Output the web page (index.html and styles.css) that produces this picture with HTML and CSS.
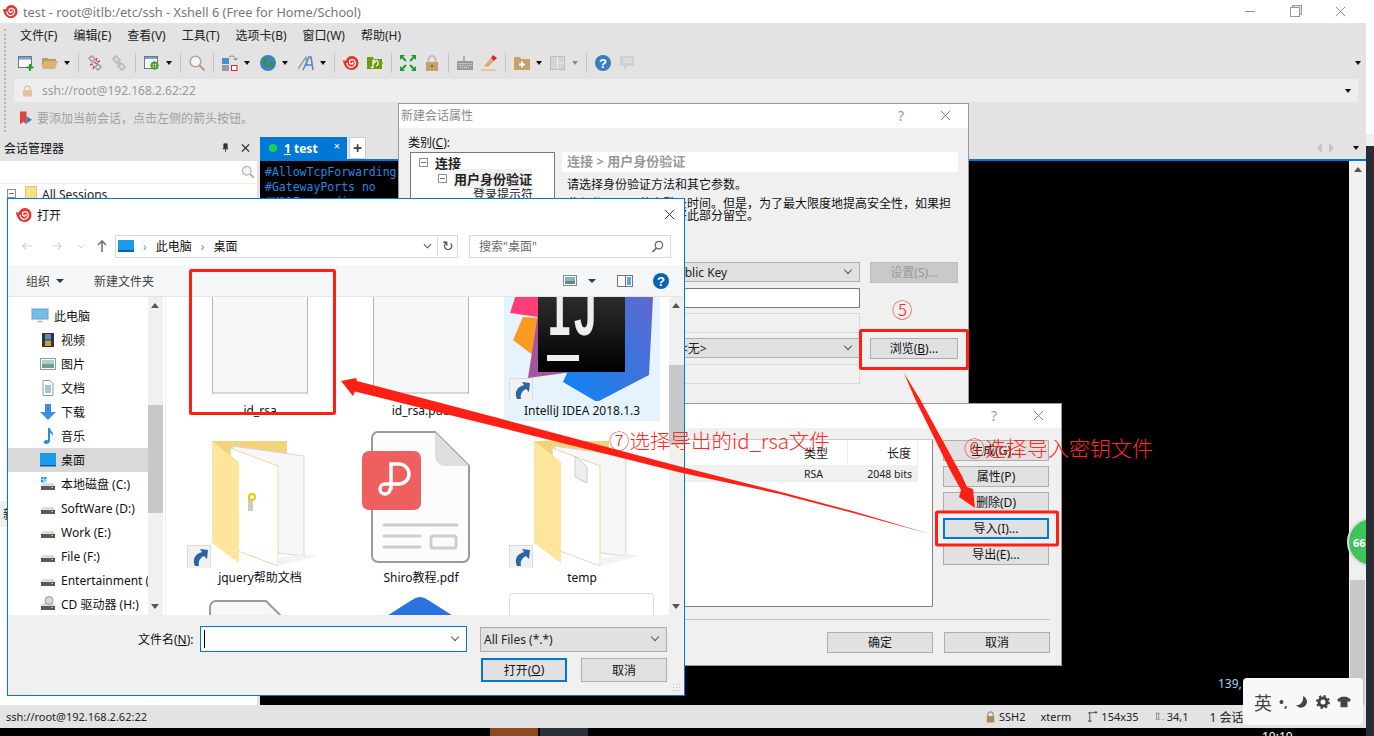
FILE: index.html
```html
<!DOCTYPE html>
<html lang="zh-CN">
<head>
    <meta charset="UTF-8">
    <title>test - root@itlb:/etc/ssh - Xshell 6</title>
    <link rel="stylesheet" href="styles.css">
</head>
<body>
    <!-- shared icons -->
    <svg class="defs" width="0" height="0">
        <symbol id="snail" viewBox="0 0 16 16">
            <path fill="#e5392e" d="M0 5c2 1 3 1 3.400-.5C4.500 2 6.500 1 9 1c3.500 0 6.500 3 6.500 7 0 4.500-3.500 7-7 7C4 15 .5 11 0 5z"/>
            <path fill="none" stroke="#fff" stroke-width="1.300" d="M4 8c0 3 3 5 5.500 4C12 11 13 8.500 12 6.500 11 4.500 8.500 4 7 5.500 5.800 7 6.500 9 8.500 9 10 9 10.400 7.500 9.500 7"/>
        </symbol>
        <symbol id="shortcut" viewBox="0 0 24 24">
            <rect x=".5" y=".5" width="23" height="23" fill="#f1f1f1" stroke="#dcdcdc"/>
            <path fill="#2b63a8" d="M13 4l8 1-1 9-3-3c-4 2-6 5-5 10H8C5 14 8 9 15 7z"/>
        </symbol>
        <symbol id="folder" viewBox="0 0 156 147">
            <path fill="#f3d27c" d="M30 20h75v60H50z"/>
            <path fill="#f7f7f7" stroke="#d5d5d5" d="M50 25l72 10v100l-25-3z"/>
            <path fill="#fff" stroke="#e8d9a8" d="M48 27l48 18v100l-40-15z"/>
            <path fill="#fee59c" d="M30 20l27 21v101l-27-20z"/>
            <path fill="#eee" opacity=".7" d="M96 145l40-10-14-2-26 4z"/>
        </symbol>
        <symbol id="blank-file" viewBox="0 0 156 147">
            <rect x="30.500" y="20" width="95" height="119" fill="#f6f7f8" stroke="#b4b4b4"/>
        </symbol>
        <symbol id="drive" viewBox="0 0 16 16">
            <path fill="#dcdcdc" d="M3 7h10l2 3H1z"/>
            <rect x="1" y="10" width="14" height="4" fill="#5a5a5a"/>
            <rect x="11" y="11" width="2" height="1" fill="#6fe06f"/>
        </symbol>
    </svg>

    <div class="screen">
        <div class="left-col">
            <div class="app">
                <header class="title-bar">
                    <svg class="title-logo"><use href="#snail"/></svg>
                    <span class="title-text">test - root@itlb:/etc/ssh - Xshell 6 (Free for Home/School)</span>
                    <div class="win-controls">
                        <span class="ctl-min"></span>
                        <span class="ctl-restore"></span>
                        <svg class="ctl-close" viewBox="0 0 12 12"><path d="M1 1l10 10M11 1L1 11" stroke="#8a8a8a" fill="none"/></svg>
                    </div>
                </header>

                <div class="chrome">
                    <nav class="menu-bar">
                        <span>文件(F)</span>
                        <span>编辑(E)</span>
                        <span>查看(V)</span>
                        <span>工具(T)</span>
                        <span>选项卡(B)</span>
                        <span>窗口(W)</span>
                        <span>帮助(H)</span>
                    </nav>

                    <div class="tool-bar">
                        <svg class="tool" viewBox="0 0 16 16"><rect x=".5" y="1.500" width="13" height="11" fill="#f7f7f7" stroke="#777"/><rect x="1" y="2" width="12" height="2.500" fill="#6aa5dc"/><path d="M12 9v7M8.500 12.500h7" stroke="#1fa02a" stroke-width="2"/></svg>
                        <svg class="tool" viewBox="0 0 16 16"><path fill="#c59a60" d="M0 3h6l1 1h7v2H3L0 13z"/><path fill="#dcb27a" d="M3 6h13l-3 8H0z"/></svg>
                        <i class="caret"></i>
                        <i class="sep"></i>
                        <svg class="tool" viewBox="0 0 16 16"><path d="M2 3l3-2 3 3-3 3zM8 12l3-3 3 3-3 3z" fill="none" stroke="#a5a5a5" stroke-width="1.600"/><path d="M7 7l3 2M10 3l-1 3M3 10l3-1M6 14l1-3M13 6l-3 1" stroke="#e2404a" stroke-width="1.400"/></svg>
                        <svg class="tool" viewBox="0 0 16 16"><path d="M2 4l3-3 4 4-3 3zM7 11l3-3 4 4-3 3z" fill="none" stroke="#bdbdbd" stroke-width="1.800"/><path d="M6 6l4 4" stroke="#bdbdbd" stroke-width="1.800"/></svg>
                        <i class="sep"></i>
                        <svg class="tool" viewBox="0 0 16 16"><rect x=".5" y="1.500" width="13" height="12" fill="#f5f5f5" stroke="#777"/><rect x="1" y="2" width="12" height="2" fill="#6aa5dc"/><circle cx="10.500" cy="10.500" r="3" fill="none" stroke="#52a032" stroke-width="2"/><path d="M10.500 6v9M6 10.500h9" stroke="#52a032" stroke-width="1.200"/></svg>
                        <i class="caret"></i>
                        <i class="sep"></i>
                        <svg class="tool" viewBox="0 0 16 16"><circle cx="6.500" cy="6.500" r="5.300" fill="#f4f4f4" stroke="#a8a8a8" stroke-width="1.500"/><path d="M10.500 10.500l5 5" stroke="#c69a62" stroke-width="2"/></svg>
                        <i class="sep"></i>
                        <svg class="tool" viewBox="0 0 16 16"><rect y="3" width="7" height="6" fill="#4a8fd4"/><rect y="10" width="7" height="6" fill="#9a9a9a"/><rect x="9.500" y="10.500" width="5.500" height="5" fill="#fff" stroke="#e02020"/><path d="M7 2c3-2 6-1 7 3M14 5l1.500-2M14 5l-2.500-1" stroke="#888" fill="none"/></svg>
                        <i class="caret"></i>
                        <svg class="tool nudge" viewBox="0 0 16 16"><circle cx="8" cy="8" r="8" fill="#3c82c8"/><path fill="#3f8f3a" d="M3 3l4-1 1 3-2 3 1 3-2 1-2-4zM10 6l4 1-1 5-3 2-1-5z"/></svg>
                        <i class="caret"></i>
                        <svg class="tool nudge" viewBox="0 0 16 16"><path d="M0 14L8 2l1 9" stroke="#9c9c9c" fill="none" stroke-width="1.400"/><path d="M5 15L11 2h2l2 13M7 10h7" stroke="#4f87c7" fill="none" stroke-width="1.600"/></svg>
                        <i class="caret"></i>
                        <i class="sep"></i>
                        <svg class="tool"><use href="#snail"/></svg>
                        <svg class="tool" viewBox="0 0 16 16"><path fill="#6a9e12" d="M0 2h6l1 2h8v3l1 1-1 1v5H0z"/><path d="M6 5v7c0 1-1 1-2 0M6 8c3 0 3-3 0-3M9 5c3 1 3 5 0 6" stroke="#fff" fill="none" stroke-width="1.200"/></svg>
                        <i class="sep"></i>
                        <svg class="tool" viewBox="0 0 16 16"><g fill="#1f9c2e"><path d="M0 0h5L0 5zM16 0v5l-5-5zM0 16v-5l5 5zM16 16h-5l5-5z"/></g><path d="M2 2l4 4M14 2l-4 4M2 14l4-4M14 14l-4-4" stroke="#1f9c2e" stroke-width="2"/></svg>
                        <svg class="tool" viewBox="0 0 16 16"><path d="M4.500 8V4.500a3.500 3.500 0 0 1 7 0V8" fill="none" stroke="#b5b5b5" stroke-width="1.600"/><rect x="2" y="7" width="12" height="9" fill="#c9a26b"/><circle cx="8" cy="11" r="1.300" fill="#8a6a3a"/></svg>
                        <i class="sep"></i>
                        <svg class="tool" viewBox="0 0 16 16"><rect y="6" width="16" height="9" fill="#999"/><path d="M1.500 8.500h13M1.500 10.500h13M3 12.500h10" stroke="#e3e3e3" stroke-dasharray="1 1"/><path d="M7 6V1" stroke="#777"/></svg>
                        <svg class="tool" viewBox="0 0 16 16"><path fill="#e0aa70" d="M3 11L10 3l3 3-6 6z"/><path fill="#d8262c" d="M10 3l2-3 4 3-3 3z"/><path d="M0 15h15" stroke="#e8b070" stroke-width="1.300"/></svg>
                        <i class="sep"></i>
                        <svg class="tool" viewBox="0 0 16 16"><path fill="#c9a06a" d="M0 2h6l1 2h9v11H0z"/><path d="M8 6.500v6M5 9.500h6" stroke="#fff" stroke-width="1.800"/></svg>
                        <i class="caret"></i>
                        <svg class="tool" viewBox="0 0 16 16"><rect x=".5" y="1.500" width="14" height="13" fill="#d4d4d4" stroke="#bbb"/><path d="M7.500 1.500v13M7.500 8h7" stroke="#ececec"/></svg>
                        <i class="caret off"></i>
                        <i class="sep"></i>
                        <svg class="tool" viewBox="0 0 16 16"><circle cx="8" cy="8" r="8" fill="#3a7dc4"/><text x="8" y="12.500" class="help-mark">?</text></svg>
                        <svg class="tool" viewBox="0 0 16 16"><path fill="#d0d0d0" d="M1 1h14v10H8l-3 4v-4H1z"/><path d="M3.500 4h9M3.500 7h9" stroke="#eee"/></svg>
                        <i class="caret end"></i>
                    </div>

                    <div class="address-bar">
                        <svg class="addr-lock" viewBox="0 0 12 12"><path d="M3 6V3.500a3 3 0 0 1 6 0V6" fill="none" stroke="#e0c49a" stroke-width="1.400"/><rect x="1" y="5" width="10" height="7" fill="#e0c49a"/></svg>
                        <span>ssh://root@192.168.2.62:22</span>
                        <i class="caret end"></i>
                    </div>

                    <div class="hint-bar">
                        <svg class="hint-flag" viewBox="0 0 14 14"><path fill="#e5433a" d="M0 0h7v14l-3.500-3L0 14z"/><path fill="#3a7dc4" d="M7 5l6 4-6 4z"/></svg>
                        <span>要添加当前会话，点击左侧的箭头按钮。</span>
                    </div>
                </div>

                <div class="main">
                    <aside class="session-panel">
                        <div class="panel-head">
                            <span>会话管理器</span>
                            <span class="panel-tools">
                                <svg viewBox="0 0 10 12"><path d="M3 1h4v5l1 1H2l1-1zM5 7v4" fill="#333" stroke="#333"/></svg>
                                <svg viewBox="0 0 10 10"><path d="M1 1l8 8M9 1L1 9" stroke="#222" stroke-width="1.400"/></svg>
                            </span>
                        </div>
                        <div class="panel-search">
                            <svg viewBox="0 0 16 16"><circle cx="6.500" cy="6.500" r="5" fill="#f2f2f2" stroke="#b5b5b5" stroke-width="1.400"/><path d="M10.500 10.500l4 4" stroke="#c9a26b" stroke-width="2"/></svg>
                        </div>
                        <div class="panel-tree">
                            <i class="tree-toggle"></i>
                            <i class="tree-folder"></i>
                            <span>All Sessions</span>
                        </div>
                        <div class="panel-props">新</div>
                    </aside>

                    <div class="work-area">
                        <div class="tab-row">
                            <div class="tab-active">
                                <i class="tab-dot"></i>
                                <span class="tab-name"><u>1</u> test</span>
                                <span class="tab-close">×</span>
                            </div>
                            <div class="tab-add">+</div>
                            <div class="tab-nav">
                                <i class="arrow-left"></i>
                                <i class="arrow-right"></i>
                                <i class="caret"></i>
                            </div>
                        </div>
                        <div class="term-wrap">
                            <pre class="terminal">#AllowTcpForwarding
#GatewayPorts no
#X11Forwarding</pre>
                            <div class="term-coords">139,</div>
                            <div class="term-scroll">
                                <i class="scroll-up"></i>
                                <i class="term-thumb"></i>
                            </div>
                        </div>
                    </div>
                </div>

                <footer class="status-bar">
                    <span>ssh://root@192.168.2.62:22</span>
                    <div class="status-right">
                        <span class="st-ssh"><svg viewBox="0 0 12 12"><path d="M3 6V3.500a3 3 0 0 1 6 0V6" fill="none" stroke="#999" stroke-width="1.300"/><rect x="2" y="5" width="8" height="7" fill="#a98a5a"/></svg>SSH2</span>
                        <span class="st-term">xterm</span>
                        <span class="st-size"><svg viewBox="0 0 12 12"><path d="M3 1v10M1 2l2-1 2 1M1 10l2 1 2-1M5 1h6M9 0l2 1-2 1" stroke="#444" fill="none"/></svg>154x35</span>
                        <span class="st-pos"><svg viewBox="0 0 12 12"><path d="M2 1v8M5 1v8M1 1h5M1 9h5M8 9h1M11 9h1" stroke="#777" fill="none"/></svg>34,1</span>
                        <span class="st-sess">1 会话</span>
                    </div>
                </footer>

                <div class="green-badge">66</div>
            </div>

            <div class="taskbar">
                <i class="task-orange"></i>
                <i class="task-gray"></i>
                <span class="task-time">10:10</span>
            </div>
        </div>

        <div class="right-strip">
            <i class="strip-white"></i>
            <i class="strip-light"></i>
        </div>
    </div>

    <!-- 新建会话属性 -->
    <section class="win props-win">
        <div class="win-title">
            <span>新建会话属性</span>
            <span class="win-help">?</span>
            <svg class="win-x" viewBox="0 0 12 12"><path d="M1 1l10 10M11 1L1 11" stroke="#777" fill="none"/></svg>
        </div>
        <div class="props-body">
            <div class="props-label">类别(<u>C</u>):</div>
            <div class="props-grid">
                <div class="props-tree">
                    <div class="tree-line lvl0"><i class="tree-toggle"></i><b>连接</b></div>
                    <div class="tree-line lvl1"><i class="tree-toggle"></i><b class="tree-sel">用户身份验证</b></div>
                    <div class="tree-line lvl2">登录提示符</div>
                </div>
                <div class="props-right">
                    <div class="props-head">连接 &gt; 用户身份验证</div>
                    <p class="props-text">请选择身份验证方法和其它参数。</p>
                    <p class="props-text second">此部分可用于节省登录时间。但是，为了最大限度地提高安全性，如果担<br>心密码泄露，建议您将此部分留空。</p>
                    <div class="form-row first">
                        <div class="combo public-key">Public Key<i class="chev"></i></div>
                        <div class="btn disabled">设置(S)...</div>
                    </div>
                    <div class="form-row"><div class="field"></div></div>
                    <div class="form-row"><div class="field off"></div></div>
                    <div class="form-row">
                        <div class="combo none-key">&lt;无&gt;<i class="chev"></i></div>
                        <div class="btn">浏览(<u>B</u>)...</div>
                    </div>
                    <div class="form-row"><div class="field off"></div></div>
                </div>
            </div>
        </div>
    </section>

    <!-- 用户密钥 -->
    <section class="win keys-win">
        <div class="win-title">
            <span>用户密钥</span>
            <span class="win-help">?</span>
            <svg class="win-x" viewBox="0 0 12 12"><path d="M1 1l10 10M11 1L1 11" stroke="#777" fill="none"/></svg>
        </div>
        <div class="keys-body">
            <div class="key-list">
                <div class="key-head">
                    <span class="col-name"></span>
                    <span class="col-type">类型</span>
                    <span class="col-len">长度</span>
                </div>
                <div class="key-row">
                    <span class="col-name">id_rsa_2048</span>
                    <span class="col-type">RSA</span>
                    <span class="col-len">2048 bits</span>
                </div>
            </div>
            <div class="key-actions">
                <div class="btn">生成(G)...</div>
                <div class="btn">属性(P)</div>
                <div class="btn">删除(D)</div>
                <div class="btn focused">导入(I)...</div>
                <div class="btn">导出(E)...</div>
            </div>
        </div>
        <div class="keys-foot">
            <div class="btn">确定</div>
            <div class="btn">取消</div>
        </div>
    </section>

    <!-- 打开 -->
    <section class="win open-win">
        <div class="open-title">
            <svg class="title-logo"><use href="#snail"/></svg>
            <span>打开</span>
            <svg class="open-x" viewBox="0 0 12 12"><path d="M1 1l10 10M11 1L1 11" stroke="#222" fill="none"/></svg>
        </div>
        <div class="open-nav">
            <svg class="nav-arrow" viewBox="0 0 14 12"><path d="M13 6H2M6 2L2 6l4 4" stroke="#d4d4d4" fill="none" stroke-width="1.400"/></svg>
            <svg class="nav-arrow" viewBox="0 0 14 12"><path d="M1 6h11M8 2l4 4-4 4" stroke="#d4d4d4" fill="none" stroke-width="1.400"/></svg>
            <svg class="nav-chev" viewBox="0 0 8 6"><path d="M1 1l3 3 3-3" stroke="#d4d4d4" fill="none"/></svg>
            <svg class="nav-arrow up" viewBox="0 0 12 14"><path d="M6 13V2M2 6l4-4 4 4" stroke="#777" fill="none" stroke-width="1.600"/></svg>
            <div class="path-box">
                <i class="desk-icon"></i>
                <span class="crumb">›</span>
                <span>此电脑</span>
                <span class="crumb">›</span>
                <span>桌面</span>
                <svg class="path-chev" viewBox="0 0 10 6"><path d="M1 1l4 4 4-4" stroke="#666" fill="none" stroke-width="1.300"/></svg>
                <span class="path-refresh">↻</span>
            </div>
            <div class="search-box">
                <span>搜索"桌面"</span>
                <svg viewBox="0 0 14 14"><circle cx="8.500" cy="5.500" r="4" fill="none" stroke="#666" stroke-width="1.300"/><path d="M6 8.500l-4.500 4.500" stroke="#666" stroke-width="1.600"/></svg>
            </div>
        </div>
        <div class="open-tools">
            <span class="tool-text">组织<i class="caret blue"></i></span>
            <span class="tool-text">新建文件夹</span>
            <div class="view-tools">
                <svg class="view-icon" viewBox="0 0 14 11"><rect x=".5" y=".5" width="13" height="10" fill="#fff" stroke="#888"/><rect x="2" y="2" width="10" height="3.500" fill="#7fb2dc"/><rect x="2" y="5.500" width="10" height="3.500" fill="#5f8f6a"/></svg>
                <i class="caret blue"></i>
                <svg class="pane-icon" viewBox="0 0 16 12"><rect x=".5" y=".5" width="15" height="11" fill="#fff" stroke="#777"/><rect x="10" y="2" width="4" height="8" fill="#5ea6de"/><path d="M8.500 1v10" stroke="#777"/></svg>
                <svg class="help-icon" viewBox="0 0 16 16"><circle cx="8" cy="8" r="8" fill="#0a62b4"/><text x="8" y="12.500" class="help-mark">?</text></svg>
            </div>
        </div>
        <div class="open-body">
            <div class="side-nav">
                <ul class="nav-list">
                    <li class="root"><svg viewBox="0 0 18 16"><rect x="1" y="1" width="16" height="10" fill="#6cc0ee" stroke="#7a9ab0"/><path d="M6 14h6M9 11v3" stroke="#9ab"/></svg>此电脑</li>
                    <li><svg viewBox="0 0 16 16"><rect x="2" y="1" width="12" height="14" fill="#333"/><rect x="5" y="2" width="6" height="5.500" fill="#5b86c8"/><rect x="5" y="8.500" width="6" height="5.500" fill="#c89b4a"/></svg>视频</li>
                    <li><svg viewBox="0 0 16 16"><rect x=".5" y="2.500" width="15" height="11" fill="#fff" stroke="#999"/><rect x="2" y="4" width="12" height="4" fill="#a8cfe0"/><rect x="2" y="8" width="12" height="4" fill="#6f9f80"/></svg>图片</li>
                    <li><svg viewBox="0 0 16 16"><path d="M3 .5h7l3 3v12H3z" fill="#fff" stroke="#999"/><path d="M5 6h6M5 8h6M5 10h6M5 12h6" stroke="#3a8fc0"/></svg>文档</li>
                    <li><svg viewBox="0 0 16 16"><path fill="#3f8be0" d="M5 0h6v8h5l-8 8-8-8h5z"/></svg>下载</li>
                    <li><svg viewBox="0 0 16 16"><path fill="#1f90e8" d="M8 0h2c0 3 4 4 3 8-1-2-2-3-3-3v8c0 2-2 3-4 3-3 0-3-3 0-4 1 0 2 0 2 .5z"/></svg>音乐</li>
                    <li class="selected"><svg viewBox="0 0 16 16"><rect y="1" width="16" height="13" fill="#1c9be8"/><rect y="13" width="16" height="1.500" fill="#0a60a8"/></svg>桌面</li>
                    <li><svg viewBox="0 0 16 16"><use href="#drive"/><rect x="1" y="1" width="2.500" height="2.500" fill="#1ca0f0"/><rect x="4" y="1" width="2.500" height="2.500" fill="#1ca0f0"/><rect x="1" y="4" width="2.500" height="2.500" fill="#1ca0f0"/><rect x="4" y="4" width="2.500" height="2.500" fill="#8fd0f5"/></svg>本地磁盘 (C:)</li>
                    <li><svg viewBox="0 0 16 16"><use href="#drive"/></svg>SoftWare (D:)</li>
                    <li><svg viewBox="0 0 16 16"><use href="#drive"/></svg>Work (E:)</li>
                    <li><svg viewBox="0 0 16 16"><use href="#drive"/></svg>File (F:)</li>
                    <li><svg viewBox="0 0 16 16"><use href="#drive"/></svg>Entertainment (G:)</li>
                    <li><svg viewBox="0 0 16 16"><use href="#drive"/><circle cx="9" cy="4.500" r="4" fill="#d8d8d8" stroke="#999"/></svg>CD 驱动器 (H:)</li>
                </ul>
                <div class="scroll-bar">
                    <i class="scroll-up"></i>
                    <i class="side-thumb"></i>
                    <i class="scroll-down"></i>
                </div>
            </div>
            <div class="file-pane">
                <div class="file-grid">
                    <div class="tile">
                        <svg class="tile-icon"><use href="#blank-file"/></svg>
                        <span>id_rsa</span>
                    </div>
                    <div class="tile">
                        <svg class="tile-icon"><use href="#blank-file"/></svg>
                        <span>id_rsa.pub</span>
                    </div>
                    <div class="tile selected">
                        <svg class="tile-icon" viewBox="0 0 156 147">
                            <defs>
                                <linearGradient id="ij-blue" x1="0" y1="1" x2="1" y2="0"><stop offset="0" stop-color="#0a86f5"/><stop offset="1" stop-color="#6a64c8"/></linearGradient>
                                <linearGradient id="ij-black" x1="0" y1="0" x2="0" y2="1"><stop offset="0" stop-color="#333"/><stop offset="1" stop-color="#000"/></linearGradient>
                            </defs>
                            <path fill="#ff3d78" d="M18 22l40-5-10 48-42-6z"/>
                            <path fill="#fb9a20" d="M9 86l10-23 30 2-2 50z"/>
                            <path fill="#a4559e" d="M24 124l14-90 70 70-40 14z"/>
                            <path fill="url(#ij-blue)" d="M149 43l-4 78-52 27-34-20 50-110 40 10z"/>
                            <rect x="34" y="31" width="87" height="87" fill="url(#ij-black)"/>
                            <text x="43" y="81" class="ij-text" textLength="51" lengthAdjust="spacingAndGlyphs">IJ</text>
                            <rect x="43" y="101" width="32" height="6" fill="#eee"/>
                            <use href="#shortcut" x="5" y="124" width="24" height="24"/>
                        </svg>
                        <span>IntelliJ IDEA 2018.1.3</span>
                    </div>
                    <div class="tile">
                        <svg class="tile-icon" viewBox="0 0 156 147">
                            <use href="#folder"/>
                            <use href="#shortcut" x="5" y="124" width="24" height="24"/>
                            <rect x="66" y="78" width="5" height="12" fill="#ccc"/>
                            <circle cx="70" cy="76" r="3" fill="none" stroke="#e8c800" stroke-width="2"/>
                        </svg>
                        <span>jquery帮助文档</span>
                    </div>
                    <div class="tile">
                        <svg class="tile-icon" viewBox="0 0 156 147">
                            <path d="M35 11h57l34 34v90a6 6 0 0 1-6 6H35a6 6 0 0 1-6-6V17a6 6 0 0 1 6-6z" fill="#fcfcfc" stroke="#9a9a9a" stroke-width="2"/>
                            <path d="M92 11l34 34h-24a10 10 0 0 1-10-10z" fill="#dedede"/>
                            <rect x="19" y="30" width="59" height="59" rx="7" fill="#ee6060"/>
                            <path d="M48 68V43h8a10 10 0 0 1 0 20H42a5 5 0 1 0 5 5" fill="none" stroke="#fff" stroke-width="3.500" stroke-linecap="round"/>
                            <path d="M41 104h73M41 115h36M41 126h36" stroke="#cdcdcd" stroke-width="3" stroke-linecap="round"/>
                            <rect x="88" y="115" width="25" height="12" rx="2" fill="none" stroke="#cdcdcd" stroke-width="3"/>
                        </svg>
                        <span>Shiro教程.pdf</span>
                    </div>
                    <div class="tile">
                        <svg class="tile-icon" viewBox="0 0 156 147">
                            <use href="#folder"/>
                            <path fill="#eee" stroke="#ccc" d="M71 35l12 11v16l-12-6z"/>
                            <use href="#shortcut" x="5" y="124" width="24" height="24"/>
                        </svg>
                        <span>temp</span>
                    </div>
                    <div class="tile">
                        <svg class="tile-icon" viewBox="0 0 156 147"><path d="M34 13h50l14 14v120H28V19a6 6 0 0 1 6-6z" fill="#f7f7f7" stroke="#9a9a9a" stroke-width="2"/></svg>
                    </div>
                    <div class="tile">
                        <svg class="tile-icon" viewBox="0 0 156 147"><path d="M77 9q-4 0-8 3L20 43v104h114V43L85 12q-4-3-8-3z" fill="#2a72e0"/></svg>
                    </div>
                    <div class="tile">
                        <svg class="tile-icon" viewBox="0 0 156 147"><rect x="5.500" y="5.500" width="144" height="140" rx="3" fill="#fff" stroke="#ddd"/></svg>
                    </div>
                </div>
                <div class="scroll-bar">
                    <i class="scroll-up"></i>
                    <i class="file-thumb"></i>
                    <i class="scroll-down"></i>
                </div>
            </div>
        </div>
        <div class="open-foot">
            <div class="foot-row">
                <label class="name-label">文件名(<u>N</u>):</label>
                <div class="name-input"><i class="text-caret"></i><i class="chev"></i></div>
                <div class="type-select">All Files (*.*)<i class="chev"></i></div>
            </div>
            <div class="foot-row actions">
                <div class="btn primary">打开(<u>O</u>)</div>
                <div class="btn">取消</div>
            </div>
            <i class="size-grip"></i>
        </div>
    </section>

    <!-- 教程标注 -->
    <svg class="marks" viewBox="0 0 1374 736">
        <g fill="none" stroke="#ff2015" stroke-width="3">
            <rect x="190.500" y="270.500" width="144" height="143" rx="1"/>
            <rect x="860.500" y="330.500" width="107" height="38" rx="1"/>
            <rect x="936.500" y="512" width="121" height="33" rx="1"/>
        </g>
        <g fill="#ff2015">
            <path d="M341 381l15-3 1 3 143 37.500 180 48 100 25.300 75 20L930 534 855 513.500 780 494l-100-21.500-180-45-145-36-2 4.500z"/>
            <path d="M904 373l16.500 27L962 476l5 11 6 2 2 19-16-11 2-7-11-20-34.500-70z"/>
        </g>
        <g class="mark-text">
            <text x="609" y="449">⑦选择导出的id_rsa文件</text>
            <text class="six" x="964" y="456">⑥选择导入密钥文件</text>
            <text x="892" y="318">⑤</text>
        </g>
    </svg>

    <!-- 输入法状态条 -->
    <div class="ime-bar">
        <span class="ime-char">英</span>
        <span class="ime-dots">•,</span>
        <svg viewBox="0 0 14 14"><path fill="#444" d="M8 1a6 6 0 1 1-7 9c4 1 8-3 7-9z"/></svg>
        <svg viewBox="0 0 14 14"><circle cx="7" cy="7" r="4" fill="none" stroke="#444" stroke-width="3"/><circle cx="7" cy="7" r="6" fill="none" stroke="#444" stroke-width="2" stroke-dasharray="2.200 2.500"/></svg>
        <svg viewBox="0 0 16 14"><path fill="#444" d="M5 1h6l5 3-2 3-2-1v7H4V6L2 7 0 4z"/></svg>
    </div>
</body>
</html>
```

FILE: styles.css
```css
* {
    box-sizing: border-box;
}

html, body {
    margin: 0;
    padding: 0;
    width: 1374px;
    height: 736px;
    overflow: hidden;
}

body {
    position: relative;
    font-family: "Noto Sans", "Noto Sans CJK SC", sans-serif;
    font-size: 12px;
    color: #222;
    background: #2b2b36;
}

i {
    display: block;
}

.defs {
    position: absolute;
}

.screen {
    display: flex;
    height: 736px;
}

.left-col {
    width: 1366px;
    display: flex;
    flex-direction: column;
}

.right-strip {
    width: 8px;
    display: flex;
    flex-direction: column;
}

.strip-white {
    height: 134px;
    background: #fff;
}

.strip-light {
    height: 12px;
    background: #f0f0f0;
}

/* Xshell window */
.app {
    position: relative;
    height: 728px;
    display: flex;
    flex-direction: column;
    overflow: hidden;
    background: #e3e3e3;
}

.title-bar {
    height: 23px;
    flex: none;
    display: flex;
    align-items: center;
    background: #fff;
    padding-left: 3px;
}

.title-logo {
    width: 15px;
    height: 15px;
}

.title-text {
    margin-left: 5px;
    font-size: 12.750px;
    color: #777;
    white-space: nowrap;
}

.win-controls {
    margin-left: auto;
    display: flex;
    align-items: center;
    padding-right: 20px;
    gap: 35px;
}

.ctl-min {
    width: 10px;
    height: 1px;
    background: #999;
}

.ctl-restore {
    width: 10px;
    height: 10px;
    border: 1px solid #999;
    box-shadow: 2px -2px 0 -1px #e3e3e3, 2px -2px 0 0 #999;
}

.ctl-close {
    width: 11px;
    height: 11px;
}

.chrome {
    position: relative;
    height: 111px;
    flex: none;
    padding-left: 14px;
}

.chrome::before {
    content: "";
    position: absolute;
    left: 4px;
    top: 6px;
    bottom: 2px;
    border-left: 2px dotted #b5b5b5;
}

.menu-bar {
    height: 25px;
    display: flex;
    align-items: center;
    gap: 16px;
    padding: 0 0 2px 6px;
    color: #222;
}

.tool-bar {
    height: 30px;
    display: flex;
    align-items: center;
    gap: 8px;
    padding-left: 4px;
}

.tool {
    width: 16px;
    height: 16px;
    flex: none;
}

.nudge {
    margin-left: 2px;
}

.caret {
    width: 0;
    height: 0;
    flex: none;
    margin-left: -2px;
    border-left: 3px solid transparent;
    border-right: 3px solid transparent;
    border-top: 4px solid #111;
}

.caret.off {
    border-top-color: #888;
}

.caret.end {
    margin-left: auto;
}

.caret.blue {
    margin-left: 0;
    border-left-width: 4px;
    border-right-width: 4px;
    border-top: 4px solid #1e3a60;
}

.sep {
    width: 1px;
    height: 20px;
    flex: none;
    background: #c4c4c4;
}

.tool-bar .caret.end {
    margin-right: 5px;
}

.address-bar {
    height: 23px;
    margin-top: 1px;
    margin-right: 8px;
    display: flex;
    align-items: center;
    padding: 0 7px 0 8px;
    background: #eeeeee;
    color: #9a9a9a;
}

.addr-lock {
    width: 11px;
    height: 12px;
    margin-right: 9px;
}

.hint-bar {
    height: 32px;
    display: flex;
    align-items: center;
    padding-left: 6px;
    color: #9f9f9f;
}

.hint-flag {
    width: 13px;
    height: 14px;
    margin-right: 4px;
}

.main {
    flex: 1;
    display: flex;
    min-height: 0;
}

.session-panel {
    width: 257px;
    flex: none;
    display: flex;
    flex-direction: column;
    background: #fff;
}

.panel-head {
    height: 27px;
    flex: none;
    display: flex;
    align-items: center;
    justify-content: space-between;
    padding: 0 7px 0 4px;
    background: #e3e3e3;
    color: #111;
}

.panel-tools {
    display: flex;
    gap: 11px;
    align-items: center;
}

.panel-tools svg {
    width: 9px;
    height: 10px;
}

.panel-search {
    height: 23px;
    flex: none;
    display: flex;
    align-items: center;
    justify-content: flex-end;
    padding-right: 2px;
    border-bottom: 1px solid #eee;
}

.panel-search svg {
    width: 14px;
    height: 14px;
}

.panel-tree {
    height: 317px;
    flex: none;
    display: flex;
    align-items: flex-start;
    gap: 5px;
    padding: 2px 0 0 7px;
}

.tree-toggle {
    width: 9px;
    height: 9px;
    flex: none;
    border: 1px solid #919191;
    background: linear-gradient(#777, #777) center / 5px 1px no-repeat;
    margin-top: 3px;
}

.tree-folder {
    width: 12px;
    height: 15px;
    margin-left: 4px;
    background: #ffe08a;
    border: 1px solid #e6c66a;
}

.panel-props {
    height: 26px;
    flex: none;
    padding: 4px 0 0 3px;
    background: #f0f0f0;
}

.work-area {
    flex: 1;
    min-width: 0;
    margin-left: 3px;
    display: flex;
    flex-direction: column;
}

.tab-row {
    height: 27px;
    flex: none;
    display: flex;
    align-items: flex-end;
    gap: 2px;
    padding-top: 3px;
    border-bottom: 2px solid #0078d7;
}

.tab-active {
    width: 87px;
    height: 22px;
    display: flex;
    align-items: center;
    padding-left: 9px;
    background: #0078d7;
    color: #fff;
    font-weight: 700;
}

.tab-dot {
    width: 8px;
    height: 8px;
    border-radius: 50%;
    background: #18d24e;
}

.tab-name {
    margin-left: 7px;
}

.tab-close {
    margin-left: auto;
    padding: 0 7px 6px 0;
    font-weight: 400;
    font-size: 11px;
}

.tab-add {
    width: 17px;
    height: 22px;
    text-align: center;
    line-height: 20px;
    background: #fff;
    border: 1px solid #ccc;
    font-size: 16px;
    font-weight: 700;
    color: #444;
}

.tab-nav {
    margin-left: auto;
    height: 22px;
    display: flex;
    align-items: center;
    gap: 7px;
    padding-right: 7px;
}

.tab-nav .caret {
    margin-left: 12px;
}

.arrow-left, .arrow-right {
    width: 0;
    height: 0;
    border-top: 5px solid transparent;
    border-bottom: 5px solid transparent;
}

.arrow-left {
    border-right: 5px solid #c4c4c4;
}

.arrow-right {
    border-left: 5px solid #c4c4c4;
}

.term-wrap {
    flex: 1;
    position: relative;
    display: flex;
    min-height: 0;
    background: #000;
}

.terminal {
    flex: 1;
    margin: 0;
    padding: 4px 0 0 5px;
    font-family: "DejaVu Sans Mono", monospace;
    font-size: 11.500px;
    line-height: 15px;
    color: #2388e0;
}

.term-coords {
    position: absolute;
    left: 958px;
    bottom: 13px;
    color: #a8ccf0;
}

.term-scroll {
    width: 17px;
    flex: none;
    display: flex;
    flex-direction: column;
    background: #f0f0f0;
    padding-top: 6px;
}

.term-thumb {
    margin: auto 1px 0;
    height: 125px;
    background: #c8c8c8;
}

.scroll-up, .scroll-down {
    width: 0;
    height: 0;
    flex: none;
    margin: 0 auto;
    border-left: 4px solid transparent;
    border-right: 4px solid transparent;
}

.scroll-up {
    border-bottom: 5px solid #555;
}

.scroll-down {
    border-top: 5px solid #555;
}

.status-bar {
    height: 23px;
    flex: none;
    display: flex;
    align-items: center;
    padding-left: 6px;
    background: #e3e3e3;
    color: #222;
    font-size: 11px;
    white-space: nowrap;
}

.status-right {
    position: relative;
    margin-left: auto;
    width: 381px;
    display: flex;
    align-items: center;
}

.status-right span {
    display: flex;
    align-items: center;
}

.status-right svg {
    width: 11px;
    height: 12px;
    margin-right: 3px;
}

.st-term {
    margin-left: 15px;
}

.st-size {
    margin-left: 16px;
}

.st-pos {
    margin-left: 16px;
}

.st-pos svg {
    width: 9px;
}

.st-sess {
    margin-left: 21px;
    font-size: 12px;
}

.green-badge {
    position: absolute;
    left: 1347px;
    top: 517px;
    width: 50px;
    height: 50px;
    padding: 16px 0 0 4px;
    border-radius: 50%;
    border: 2px solid #dcdcdc;
    background: #3fc35a;
    color: #fff;
    font-weight: 700;
    font-size: 11px;
}

.taskbar {
    flex: 1;
    display: flex;
    overflow: hidden;
    background: #000;
    padding-left: 490px;
}

.task-orange {
    width: 48px;
    background: #8c4a1e;
}

.task-gray {
    width: 48px;
    margin-left: 2px;
    background: #2b2f38;
}

.task-time {
    margin-left: 674px;
    color: #fff;
    font-size: 12px;
    line-height: 12px;
    padding-top: 3px;
}

/* floating dialogs */
.win {
    position: absolute;
    display: flex;
    flex-direction: column;
    background: #f0f0f0;
    border: 1px solid #9a9a9a;
}

.win-title {
    height: 24px;
    flex: none;
    display: flex;
    align-items: center;
    padding: 0 17px 2px 2px;
    background: #fff;
    color: #8d8d8d;
}

.win-help {
    margin-left: auto;
    color: #999;
    font-size: 14px;
}

.win-x {
    width: 11px;
    height: 11px;
    margin-left: 36px;
}

.btn {
    height: 21px;
    padding-bottom: 1px;
    display: flex;
    align-items: center;
    justify-content: center;
    background: #e1e1e1;
    border: 1px solid #adadad;
    color: #111;
}

.btn.disabled {
    background: #c9c9c9;
    border-color: #bdbdbd;
    color: #999;
}

.btn.focused {
    border: 2px solid #0078d7;
}

.btn.primary {
    border: 2px solid #0078d7;
}

.combo, .field, .type-select, .name-input {
    position: relative;
    display: flex;
    align-items: center;
}

.chev {
    position: absolute;
    right: 8px;
    top: 50%;
    width: 6px;
    height: 6px;
    margin-top: -5px;
    border-right: 1px solid #555;
    border-bottom: 1px solid #555;
    transform: rotate(45deg);
}

.props-win {
    left: 398px;
    top: 103px;
    width: 571px;
    height: 301px;
}

.props-body {
    padding: 6px 10px 0 11px;
}

.props-label {
    height: 18px;
    line-height: 18px;
    margin-left: -2px;
    color: #111;
}

.props-grid {
    display: grid;
    grid-template-columns: 145px 396px;
    column-gap: 7px;
    align-items: start;
}

.props-tree {
    height: 120px;
    padding: 1px 0 0 8px;
    background: #fff;
    border: 1px solid #7a7a7a;
}

.tree-line {
    display: flex;
    align-items: center;
    gap: 5px;
    height: 16px;
}

.tree-line b {
    font-size: 13px;
}

.tree-line .tree-toggle {
    margin-top: 0;
}

.lvl0 b {
    margin-left: 2px;
}

.lvl1 {
    padding-left: 19px;
}

.lvl1 b {
    margin-left: 2px;
}

.lvl2 {
    padding-left: 54px;
}

.tree-sel {
    background: #f0f0f0;
}

.props-head {
    height: 20px;
    padding-left: 5px;
    line-height: 19px;
    background: #fff;
    color: #999;
    font-weight: 700;
    font-size: 13px;
}

.props-text {
    margin: 6px 0 0 5px;
    line-height: 14px;
    color: #111;
    white-space: nowrap;
}

.props-text.second {
    margin-top: 6px;
    line-height: 12px;
}

.form-row {
    display: grid;
    grid-template-columns: 1fr 88px;
    column-gap: 10px;
    margin-top: 5px;
    padding-left: 100px;
}

.form-row.first {
    margin-top: 40px;
}

.combo {
    height: 20px;
    padding-left: 4px;
    background: #e1e1e1;
    border: 1px solid #adadad;
}

.none-key {
    padding-left: 18px;
}

.public-key {
    padding-left: 7px;
}

.field {
    height: 20px;
    background: #fff;
    border: 1px solid #7a7a7a;
}

.field.off {
    background: #f0f0f0;
    border-color: #d9d9d9;
}

.keys-win {
    left: 540px;
    top: 403px;
    width: 522px;
    height: 263px;
}

.keys-body {
    display: flex;
    gap: 10px;
    padding: 11px 12px 0 11px;
}

.key-list {
    flex: 1;
    height: 168px;
    background: #fff;
    border: 1px solid #828282;
    border-top-color: #ccc;
    border-left-color: #ccc;
}

.key-head, .key-row {
    display: flex;
    width: 365px;
}

.key-head {
    height: 25px;
    align-items: center;
    color: #222;
}

.key-row {
    height: 17px;
    align-items: center;
    background: #f0f0f0;
    font-size: 10.500px;
}

.col-name {
    flex: 1;
    padding-left: 68px;
}

.col-type {
    width: 49px;
    padding-left: 5px;
    height: 100%;
    display: flex;
    align-items: center;
}

.col-len {
    width: 70px;
    padding-right: 6px;
    height: 100%;
    display: flex;
    align-items: center;
    justify-content: flex-end;
}

.key-head span {
    border-right: 1px solid #eee;
}

.key-actions {
    width: 106px;
    flex: none;
    margin-top: 1px;
    display: flex;
    flex-direction: column;
    gap: 5px;
}

.keys-foot {
    margin: 12px 11px 0 11px;
    padding-top: 12px;
    border-top: 1px solid #c4c4c4;
    display: flex;
    justify-content: flex-end;
    gap: 11px;
}

.keys-foot .btn {
    width: 106px;
}

/* open file dialog */
.open-win {
    left: 7px;
    top: 198px;
    width: 678px;
    height: 498px;
    border-color: #0078d7;
}

.open-title {
    height: 32px;
    flex: none;
    display: flex;
    align-items: center;
    padding: 0 0 1px 8px;
    background: #fff;
    color: #111;
}

.open-title .title-logo {
    width: 16px;
    height: 16px;
    margin-right: 5px;
}

.open-x {
    width: 11px;
    height: 11px;
    margin-left: auto;
    margin-right: 9px;
}

.open-nav {
    height: 34px;
    flex: none;
    display: flex;
    align-items: flex-start;
    padding: 4px 13px 0 13px;
    background: #fff;
}

.nav-arrow {
    width: 12px;
    height: 12px;
    margin: 5px 18px 0 0;
}

.nav-chev {
    width: 8px;
    height: 6px;
    margin: 9px 11px 0 -4px;
}

.nav-arrow.up {
    width: 12px;
    height: 14px;
    margin: 4px 7px 0 0;
}

.path-box {
    width: 343px;
    height: 23px;
    display: flex;
    align-items: center;
    gap: 8px;
    padding: 0 0 1px 2px;
    border: 1px solid #d9d9d9;
    color: #111;
}

.desk-icon {
    width: 16px;
    height: 12px;
    background: #1c9be8;
    border-bottom: 2px solid #0a60a8;
}

.crumb {
    color: #888;
    padding: 0 1px;
}

.path-chev {
    width: 9px;
    height: 6px;
    margin-left: auto;
}

.path-refresh {
    width: 20px;
    height: 100%;
    text-align: center;
    line-height: 19px;
    font-size: 14px;
    color: #555;
    border-left: 1px solid #d9d9d9;
    margin-left: -3px;
}

.search-box {
    width: 202px;
    height: 23px;
    margin-left: auto;
    display: flex;
    align-items: center;
    justify-content: space-between;
    padding: 0 6px 1px 9px;
    border: 1px solid #d9d9d9;
    color: #6d6d6d;
}

.search-box svg {
    width: 13px;
    height: 13px;
}

.open-tools {
    height: 32px;
    flex: none;
    display: flex;
    align-items: center;
    gap: 30px;
    padding: 0 15px 0 18px;
    background: #f5f6f7;
    border-bottom: 1px solid #e5e5e5;
    color: #444;
}

.tool-text {
    display: flex;
    align-items: center;
    gap: 6px;
}

.view-tools {
    margin-left: auto;
    display: flex;
    align-items: center;
}

.view-icon {
    width: 14px;
    height: 11px;
}

.view-tools .caret.blue {
    margin: 0 21px 0 11px;
}

.pane-icon {
    width: 16px;
    height: 12px;
}

.help-icon {
    width: 16px;
    height: 16px;
    margin-left: 20px;
}

.help-mark {
    font-family: "Liberation Sans", sans-serif;
    font-weight: 700;
    font-size: 13px;
    fill: #fff;
    text-anchor: middle;
}

.open-body {
    height: 318px;
    flex: none;
    display: flex;
    background: #fff;
    overflow: hidden;
}

.side-nav {
    width: 158px;
    flex: none;
    display: flex;
    border-right: 1px solid #f0f0f0;
}

.nav-list {
    width: 140px;
    flex: none;
    margin: 0;
    padding: 7px 0 0;
    list-style: none;
    overflow: hidden;
}

.nav-list li {
    height: 24px;
    display: flex;
    align-items: center;
    gap: 5px;
    padding-left: 32px;
    color: #111;
    white-space: nowrap;
}

.nav-list li svg {
    width: 16px;
    height: 16px;
    flex: none;
}

.nav-list li.root {
    padding-left: 23px;
}

.nav-list li.root svg {
    width: 18px;
}

.nav-list li.selected {
    background: #d9d9d9;
}

.scroll-bar {
    position: relative;
    width: 15px;
    flex: none;
    background: #f0f0f0;
}

.scroll-bar .scroll-up {
    position: absolute;
    left: 3px;
    top: 6px;
}

.scroll-bar .scroll-down {
    position: absolute;
    left: 3px;
    bottom: 6px;
}

.side-thumb {
    position: absolute;
    left: 0;
    right: 0;
    top: 108px;
    height: 108px;
    background: #c8c8c8;
}

.file-thumb {
    position: absolute;
    left: 0;
    right: 0;
    top: 68px;
    height: 80px;
    background: #c8c8c8;
}

.file-pane {
    flex: 1;
    display: flex;
    justify-content: space-between;
    min-width: 0;
}

.file-grid {
    display: grid;
    grid-template-columns: repeat(3, 156px);
    grid-auto-rows: 167px;
    column-gap: 5px;
    margin-top: -43px;
    padding-left: 16px;
}

.tile {
    display: flex;
    flex-direction: column;
    align-items: center;
    color: #111;
}

.tile.selected {
    background: #e5f3ff;
}

.tile-icon {
    width: 156px;
    height: 147px;
    flex: none;
}

.tile span {
    line-height: 20px;
}

.ij-text {
    font-family: "Liberation Mono", monospace;
    font-weight: 700;
    font-size: 70px;
    fill: #eee;
}

.open-foot {
    position: relative;
    flex: 1;
    background: #f0f0f0;
    padding: 11px 17px 0 0;
}

.foot-row {
    display: flex;
    align-items: center;
}

.name-label {
    margin-left: 130px;
    width: 62px;
    color: #111;
    white-space: nowrap;
}

.name-input {
    width: 267px;
    height: 26px;
    background: #fff;
    border: 1px solid #0078d7;
}

.text-caret {
    width: 1px;
    height: 18px;
    margin-left: 3px;
    background: #000;
}

.type-select {
    width: 187px;
    height: 25px;
    margin-left: 13px;
    padding-left: 3px;
    background: #e1e1e1;
    border: 1px solid #adadad;
}

.foot-row.actions {
    justify-content: flex-end;
    gap: 14px;
    margin-top: 6px;
}

.foot-row.actions .btn {
    width: 86px;
    height: 24px;
}

.size-grip {
    position: absolute;
    right: 2px;
    bottom: 2px;
    width: 10px;
    height: 10px;
    background: radial-gradient(circle, #bbb 1px, transparent 1px) 0 0 / 3px 3px;
}

/* annotations */
.marks {
    position: absolute;
    left: 0;
    top: 0;
    width: 1374px;
    height: 736px;
    pointer-events: none;
}

.mark-text {
    font-family: "Noto Sans CJK SC", "Noto Sans", sans-serif;
    font-size: 20.500px;
    font-weight: 300;
    fill: #ff2a1f;
}

.mark-text .six {
    font-size: 21px;
}

.ime-bar {
    position: absolute;
    left: 1243px;
    top: 678px;
    width: 120px;
    height: 47px;
    display: flex;
    align-items: center;
    gap: 7px;
    padding-left: 11px;
    border-radius: 4px;
    background: #f8f8f8;
    color: #444;
}

.ime-bar svg {
    width: 14px;
    height: 14px;
    flex: none;
}

.ime-char {
    font-family: "Noto Sans CJK SC", serif;
    font-size: 18px;
}

.ime-dots {
    font-size: 13px;
    font-weight: 700;
}
```
